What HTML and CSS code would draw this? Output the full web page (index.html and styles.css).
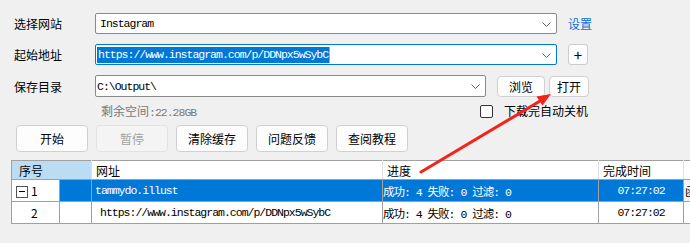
FILE: index.html
```html
<!DOCTYPE html>
<html lang="zh-CN">
<head>
  <meta charset="UTF-8">
  <title>下载器</title>
  <link rel="stylesheet" href="styles.css">
</head>
<body>

  <div class="form">
    <!-- 选择网站 -->
    <div class="row">
      <span class="label">选择网站</span>
      <div class="combo">
        <span class="mono">Instagram</span>
        <svg class="chevron" width="9" height="5" viewBox="0 0 9 5"><path d="M0.5 0.5 L4.5 4.5 L8.5 0.5" fill="none" stroke="#606060" stroke-width="1"/></svg>
      </div>
      <a class="link">设置</a>
    </div>

    <!-- 起始地址 -->
    <div class="row">
      <span class="label">起始地址</span>
      <div class="combo focused">
        <span class="mono selected">https://www.instagram.com/p/DDNpx5wSybC</span><span class="caret"></span>
        <svg class="chevron" width="9" height="5" viewBox="0 0 9 5"><path d="M0.5 0.5 L4.5 4.5 L8.5 0.5" fill="none" stroke="#606060" stroke-width="1"/></svg>
      </div>
      <button class="small-button">+</button>
    </div>

    <!-- 保存目录 -->
    <div class="row row-dir">
      <span class="label">保存目录</span>
      <div class="combo combo-dir">
        <span class="mono dir-text">C:\Output\</span>
        <svg class="chevron" width="9" height="5" viewBox="0 0 9 5"><path d="M0.5 0.5 L4.5 4.5 L8.5 0.5" fill="none" stroke="#606060" stroke-width="1"/></svg>
      </div>
      <button class="btn btn-browse">浏览</button>
      <button class="btn btn-open">打开</button>
    </div>

    <div class="info-row">
      <span class="free-space">剩余空间<span class="mono">:22.28GB</span></span>
      <span class="checkbox"></span>
      <span class="check-label">下载完自动关机</span>
    </div>

    <div class="actions">
      <button class="btn action">开始</button>
      <button class="btn action disabled">暂停</button>
      <button class="btn action">清除缓存</button>
      <button class="btn action">问题反馈</button>
      <button class="btn action">查阅教程</button>
    </div>
  </div>

  <table class="grid">
    <colgroup>
      <col class="c-tree">
      <col class="c-mark">
      <col class="c-url">
      <col class="c-progress">
      <col class="c-time">
      <col class="c-extra">
    </colgroup>
    <thead>
      <tr>
        <th colspan="2" class="th-sorted">序号</th>
        <th>网址</th>
        <th>进度</th>
        <th>完成时间</th>
        <th></th>
      </tr>
    </thead>
    <tbody>
      <tr class="selected-row">
        <td class="tree-cell"><span class="tree-box"></span>1</td>
        <td></td>
        <td class="mono url-cell">tammydo.illust</td>
        <td class="mono">成功: 4 失败: 0 过滤: 0</td>
        <td class="mono time-cell">07:27:02</td>
        <td class="extra-cell">函</td>
      </tr>
      <tr>
        <td class="tree-cell num-cell">2</td>
        <td></td>
        <td class="mono url-cell child">https://www.instagram.com/p/DDNpx5wSybC</td>
        <td class="mono">成功: 4 失败: 0 过滤: 0</td>
        <td class="mono time-cell">07:27:02</td>
        <td></td>
      </tr>
    </tbody>
  </table>

  <!-- seta vermelha de anotação -->
  <svg class="annotation" width="690" height="243" viewBox="0 0 690 243">
    <line x1="421" y1="172" x2="540" y2="101" stroke="#f5221b" stroke-width="3" stroke-linecap="round"/>
    <polygon points="551,94 542.5,105.5 536.5,96.5" fill="#f5221b"/>
  </svg>

</body>
</html>
```

FILE: styles.css
```css
/* Janela geral */
body {
  margin: 0;
  background-color: #f0f0f0;
  font-family: "Noto Sans CJK SC", "Microsoft YaHei", sans-serif;
  font-size: 12px;
  color: #000;
  width: 690px;
  height: 243px;
  overflow: hidden;
  position: relative;
}

.mono {
  font-family: "Liberation Mono", "Noto Sans CJK SC", monospace;
  font-size: 11.5px;
  letter-spacing: -1px;
}

/* Formulário superior */
.form {
  padding: 13px 0 0 14px;
}

.row {
  display: flex;
  align-items: center;
  height: 21px;
  margin-bottom: 10px;
}

.row-dir {
  height: 22px;
  margin-bottom: 3px;
}

.label {
  width: 81px;
  font-size: 12px;
}

.combo {
  box-sizing: border-box;
  width: 462px;
  height: 100%;
  background-color: #fff;
  border: 1px solid #8a8a8a;
  border-radius: 2px;
  display: flex;
  align-items: center;
  padding-left: 4px;
  position: relative;
}

.combo .chevron {
  position: absolute;
  right: 5px;
  top: 50%;
  margin-top: -2px;
}

.combo.focused {
  border-color: #0078d7;
  padding-left: 1px;
}

.combo-dir {
  width: 391px;
  padding-left: 1px;
}

.selected {
  background-color: #0078d7;
  color: #fff;
  line-height: 16px;
  padding: 0 1px;
}

.caret {
  display: inline-block;
  width: 1px;
  height: 16px;
  background-color: #f09a30;
}

.link {
  margin-left: 11px;
  color: #0a6fd8;
  font-size: 12px;
  cursor: pointer;
}

/* Botões */
button {
  font-family: inherit;
  font-size: 12px;
  cursor: pointer;
}

.btn {
  box-sizing: border-box;
  background-color: #fdfdfd;
  border: 1px solid #d0d0d0;
  border-radius: 4px;
  color: #000;
  padding: 0;
}

.small-button {
  box-sizing: border-box;
  width: 20px;
  height: 21px;
  margin-left: 11px;
  padding: 0;
  background-color: #fdfdfd;
  border: 1px solid #cccccc;
  border-radius: 3px;
  font-size: 15px;
  line-height: 1;
}

.btn-browse {
  width: 48px;
  height: 21px;
  margin-left: 11px;
}

.btn-open {
  width: 40px;
  height: 21px;
  margin-left: 4px;
}

.info-row {
  display: flex;
  align-items: center;
  height: 20px;
  padding-left: 87px;
}

.free-space {
  width: 379px;
  color: #7a7a7a;
}

.free-space .mono {
  color: #7a7a7a;
}

.checkbox {
  box-sizing: border-box;
  width: 13px;
  height: 13px;
  border: 1px solid #333;
  border-radius: 2px;
  background-color: #fff;
  margin-top: 2px;
}

.check-label {
  margin-left: 11px;
}

.actions {
  display: flex;
  gap: 8px;
  margin-top: 5px;
  margin-left: 2px;
}

.action {
  width: 72px;
  height: 27px;
}

.action.disabled {
  background-color: #f4f4f4;
  border-color: #e3e3e3;
  color: #a3a3a3;
  cursor: default;
}

/* Tabela de tarefas */
.grid {
  margin: 8px 0 0 11px;
  border-collapse: collapse;
  table-layout: fixed;
  width: 700px;
  background-color: #fff;
  border: 1px solid #a0a0a0;
}

.c-tree { width: 48px; }
.c-mark { width: 32px; }
.c-url { width: 291px; }
.c-progress { width: 216px; }
.c-time { width: 85px; }
.c-extra { width: 28px; }

.grid th {
  height: 18px;
  padding: 0 0 0 4px;
  font-weight: normal;
  text-align: left;
  border-right: 1px solid #e0e0e0;
  border-bottom: 1px solid #a0a0a0;
  white-space: nowrap;
  overflow: hidden;
}

.grid th.th-sorted {
  background-color: #bcdcf4;
  padding-left: 7px;
}

.grid td {
  height: 21px;
  padding: 0;
  border: 1px solid #a0a0a0;
  white-space: nowrap;
  overflow: hidden;
}

.selected-row td {
  background-color: #0078d7;
  color: #fff;
}

.selected-row td.tree-cell {
  background-color: #fff;
  color: #000;
}

.selected-row td.extra-cell {
  background-color: #f4f4f4;
  color: #000;
  padding-left: 1px;
}

.tree-cell {
  padding-left: 4px !important;
}

.num-cell {
  padding-left: 19px !important;
}

.tree-box {
  display: inline-block;
  box-sizing: border-box;
  width: 12px;
  height: 12px;
  border: 1px solid #555;
  background-color: #fff;
  vertical-align: -2px;
  margin-right: 3px;
  position: relative;
}

.tree-box::after {
  content: "";
  position: absolute;
  left: 2px;
  right: 2px;
  top: 4px;
  height: 1px;
  background-color: #000;
}

.url-cell {
  padding-left: 3px !important;
}

.url-cell.child {
  padding-left: 8px !important;
}

.time-cell {
  text-align: center;
}

/* Anotação por cima de tudo */
.annotation {
  position: absolute;
  left: 0;
  top: 0;
  pointer-events: none;
}
```
